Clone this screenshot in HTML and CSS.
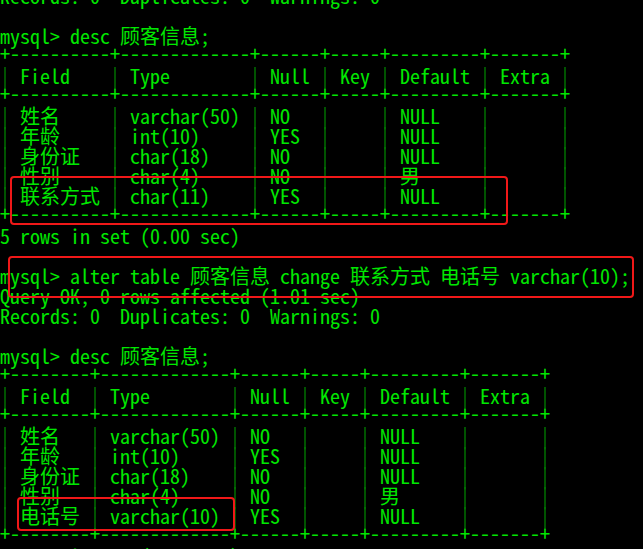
FILE: index.html
```html
<!DOCTYPE html>
<html>
<head>
<meta charset="utf-8">
<link rel="stylesheet" href="styles.css">
</head>
<body>
<div class="term">
<pre class="out">Records: 0  Duplicates: 0  Warnings: 0

mysql&gt; desc 顾客信息;
<span class="rule">+----------+-------------+------+-----+---------+-------+</span>
<span class="b">|</span> Field    <span class="b">|</span> Type        <span class="b">|</span> Null <span class="b">|</span> Key <span class="b">|</span> Default <span class="b">|</span> Extra <span class="b">|</span>
<span class="rule">+----------+-------------+------+-----+---------+-------+</span>
<span class="b">|</span> 姓名     <span class="b">|</span> varchar(50) <span class="b">|</span> NO   <span class="b">|</span>     <span class="b">|</span> NULL    <span class="b">|</span>       <span class="b">|</span>
<span class="b">|</span> 年龄     <span class="b">|</span> int(10)     <span class="b">|</span> YES  <span class="b">|</span>     <span class="b">|</span> NULL    <span class="b">|</span>       <span class="b">|</span>
<span class="b">|</span> 身份证   <span class="b">|</span> char(18)    <span class="b">|</span> NO   <span class="b">|</span>     <span class="b">|</span> NULL    <span class="b">|</span>       <span class="b">|</span>
<span class="b">|</span> 性别     <span class="b">|</span> char(4)     <span class="b">|</span> NO   <span class="b">|</span>     <span class="b">|</span> 男      <span class="b">|</span>       <span class="b">|</span>
<span class="b">|</span> 联系方式 <span class="b">|</span> char(11)    <span class="b">|</span> YES  <span class="b">|</span>     <span class="b">|</span> NULL    <span class="b">|</span>       <span class="b">|</span>
<span class="rule">+----------+-------------+------+-----+---------+-------+</span>
5 rows in set (0.00 sec)

mysql&gt; alter table 顾客信息 change 联系方式 电话号 varchar(10);
Query OK, 0 rows affected (1.01 sec)
Records: 0  Duplicates: 0  Warnings: 0

mysql&gt; desc 顾客信息;
<span class="rule">+--------+-------------+------+-----+---------+-------+</span>
<span class="b">|</span> Field  <span class="b">|</span> Type        <span class="b">|</span> Null <span class="b">|</span> Key <span class="b">|</span> Default <span class="b">|</span> Extra <span class="b">|</span>
<span class="rule">+--------+-------------+------+-----+---------+-------+</span>
<span class="b">|</span> 姓名   <span class="b">|</span> varchar(50) <span class="b">|</span> NO   <span class="b">|</span>     <span class="b">|</span> NULL    <span class="b">|</span>       <span class="b">|</span>
<span class="b">|</span> 年龄   <span class="b">|</span> int(10)     <span class="b">|</span> YES  <span class="b">|</span>     <span class="b">|</span> NULL    <span class="b">|</span>       <span class="b">|</span>
<span class="b">|</span> 身份证 <span class="b">|</span> char(18)    <span class="b">|</span> NO   <span class="b">|</span>     <span class="b">|</span> NULL    <span class="b">|</span>       <span class="b">|</span>
<span class="b">|</span> 性别   <span class="b">|</span> char(4)     <span class="b">|</span> NO   <span class="b">|</span>     <span class="b">|</span> 男      <span class="b">|</span>       <span class="b">|</span>
<span class="b">|</span> 电话号 <span class="b">|</span> varchar(10) <span class="b">|</span> YES  <span class="b">|</span>     <span class="b">|</span> NULL    <span class="b">|</span>       <span class="b">|</span>
<span class="rule">+--------+-------------+------+-----+---------+-------+</span>
5 rows in set (0.00 sec)</pre>
<div class="mark mark-1"></div>
<div class="mark mark-2"></div>
<div class="mark mark-3"></div>
</div>
</body>
</html>
```
FILE: styles.css
```css
html, body {
  margin: 0;
  padding: 0;
  background: #000;
  width: 643px;
  height: 549px;
  overflow: hidden;
}

.term {
  position: relative;
  width: 643px;
  height: 549px;
  overflow: hidden;
  background: #000;
}

.out {
  margin: -14px 0 0 0;
  padding: 0;
  font-family: "Noto Sans Mono CJK SC", "Noto Sans CJK SC", monospace;
  font-size: 20px;
  line-height: 20px;
  color: #00e800;
  white-space: pre;
}

.b {
  color: #007a00;
}

.rule {
  line-height: 12px;
  vertical-align: 3px;
}

.mark {
  position: absolute;
  border: 2px solid #f01818;
  border-radius: 4px;
  box-sizing: border-box;
}

.mark-1 {
  left: 10px;
  top: 176px;
  width: 498px;
  height: 49px;
}

.mark-2 {
  left: 8px;
  top: 256px;
  width: 626px;
  height: 42px;
}

.mark-3 {
  left: 17px;
  top: 497px;
  width: 218px;
  height: 34px;
}
```
